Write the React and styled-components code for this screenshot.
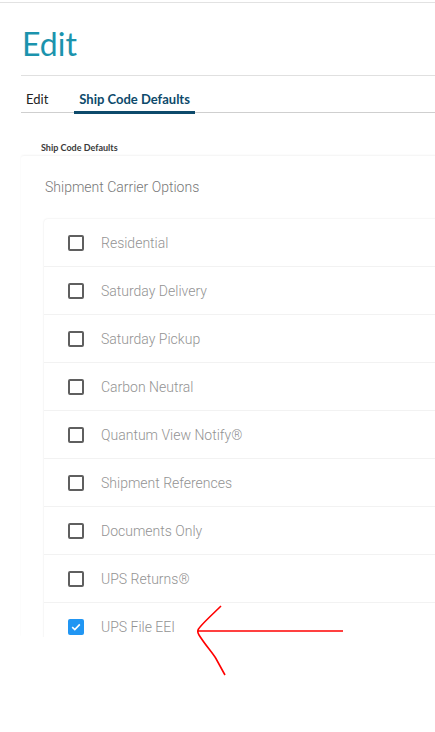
import React from 'react';
import styled, { createGlobalStyle } from 'styled-components';

const GlobalStyle = createGlobalStyle`
  html, body {
    margin: 0;
    padding: 0;
    background: #fff;
  }
  body {
    font-family: "Lato", "Open Sans", sans-serif;
    overflow: hidden;
  }
`;

const options = [
  { label: 'Residential', checked: false },
  { label: 'Saturday Delivery', checked: false },
  { label: 'Saturday Pickup', checked: false },
  { label: 'Carbon Neutral', checked: false },
  { label: 'Quantum View Notify®', checked: false },
  { label: 'Shipment References', checked: false },
  { label: 'Documents Only', checked: false },
  { label: 'UPS Returns®', checked: false },
  { label: 'UPS File EEI', checked: true },
];

function Checkbox({ checked }) {
  return (
    <Box checked={checked}>
      {checked && (
        <svg width="12" height="12" viewBox="0 0 12 12">
          <path d="M2.2 6.2 L4.8 8.6 L9.8 3.4" fill="none" stroke="#fff" strokeWidth="1.6" />
        </svg>
      )}
    </Box>
  );
}

function App() {
  return (
    <Page>
      <GlobalStyle />
      <Header>
        <Title>Edit</Title>
      </Header>
      <Tabs>
        <Tab>Edit</Tab>
        <Tab active>Ship Code Defaults</Tab>
      </Tabs>
      <SectionLabel>Ship Code Defaults</SectionLabel>
      <Card>
        <CardTitle>Shipment Carrier Options</CardTitle>
        <List>
          {options.map((o) => (
            <Row key={o.label}>
              <Checkbox checked={o.checked} />
              <Label>{o.label}</Label>
            </Row>
          ))}
        </List>
      </Card>
      <Arrow width="160" height="80" viewBox="0 0 160 80">
        <path d="M4 29 L149 29" fill="none" stroke="#f00" strokeWidth="1.6" />
        <path d="M27 4 C20 11 12 18 6 25 C3 28 3 30 5 33 C10 41 16 48 21 55 C24 60 27 66 31 73" fill="none" stroke="#f00" strokeWidth="1.6" />
      </Arrow>
    </Page>
  );
}

export default App;

const Page = styled.div`
  position: relative;
  width: 435px;
  height: 732px;
  padding-top: 2px;
  box-sizing: border-box;
  overflow: hidden;
  &:before {
    content: "";
    display: block;
    height: 1px;
    background: #e2e2e2;
  }
`;

const Header = styled.div`
  margin-left: 21px;
  height: 72px;
  border-bottom: 1px solid #e0e0e0;
  display: flex;
  align-items: flex-end;
`;

const Title = styled.h1`
  margin: 0 0 15px 1px;
  font-family: "Lato", sans-serif;
  font-weight: 400;
  font-size: 32px;
  line-height: 1;
  color: #1b93ad;
`;

const Tabs = styled.div`
  margin-left: 21px;
  height: 36px;
  display: flex;
  align-items: flex-end;
  border-bottom: 1px solid #cfcfcf;
`;

const Tab = styled.div`
  padding: 0 5px 4px;
  margin-left: ${(p) => (p.active ? '21px' : '0')};
  font-size: 13px;
  color: ${(p) => (p.active ? '#0d4a6b' : '#222')};
  font-weight: ${(p) => (p.active ? 700 : 400)};
  border-bottom: 3px solid ${(p) => (p.active ? '#0d4a6b' : 'transparent')};
  margin-bottom: -2px;
`;

const SectionLabel = styled.div`
  margin: 29px 0 0 41px;
  font-size: 9px;
  font-weight: 700;
  color: #3a3a3a;
  line-height: 12px;
`;

const Card = styled.div`
  margin: 2px 0 0 21px;
  width: 500px;
  height: 481px;
  box-shadow: 0 -1px 2px rgba(0, 0, 0, 0.05);
  border-radius: 3px 0 0 0;
  overflow: hidden;
`;

const CardTitle = styled.div`
  padding: 22px 0 0 24px;
  font-family: "Roboto", sans-serif;
  font-weight: 300;
  font-size: 14px;
  color: #777;
  line-height: 18px;
`;

const List = styled.div`
  margin: 23px 0 0 23px;
  border-radius: 4px 0 0 0;
  box-shadow: 0 0 2px rgba(0, 0, 0, 0.12);
`;

const Row = styled.div`
  height: 48px;
  display: flex;
  align-items: center;
  padding-left: 24px;
  gap: 17px;
  border-bottom: 1px solid #f2f2f2;
  box-sizing: border-box;
`;

const Box = styled.span`
  width: 16px;
  height: 16px;
  box-sizing: border-box;
  border-radius: 2px;
  border: ${(p) => (p.checked ? 'none' : '2px solid #5f5f5f')};
  background: ${(p) => (p.checked ? '#2196f3' : '#fff')};
  display: flex;
  align-items: center;
  justify-content: center;
`;

const Label = styled.span`
  font-family: "Roboto", sans-serif;
  font-weight: 300;
  font-size: 14px;
  color: #939393;
`;

const Arrow = styled.svg`
  position: absolute;
  left: 194px;
  top: 602px;
`;
